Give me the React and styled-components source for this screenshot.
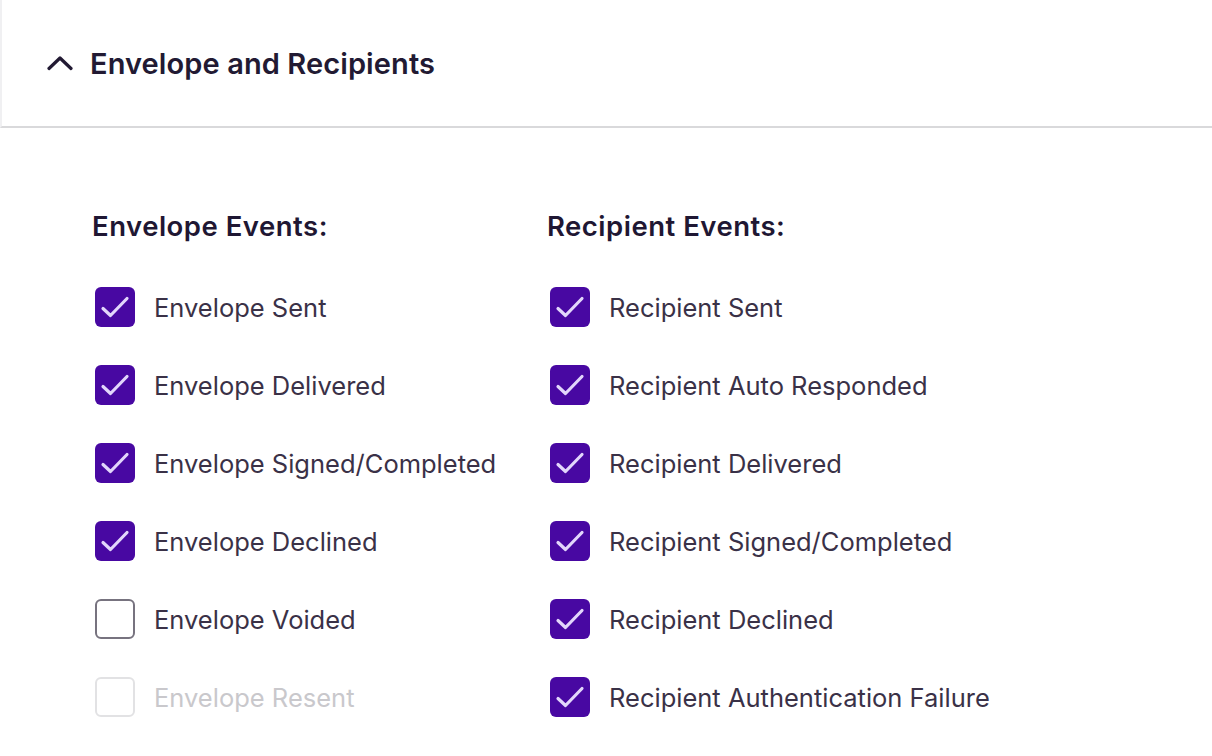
import React from "react";
import styled, { createGlobalStyle } from "styled-components";

const GlobalStyle = createGlobalStyle`
  body {
    margin: 0;
    background: #ffffff;
    font-family: "Inter", "Open Sans", sans-serif;
  }
`;

const envelopeEvents = [
  { label: "Envelope Sent", checked: true },
  { label: "Envelope Delivered", checked: true },
  { label: "Envelope Signed/Completed", checked: true },
  { label: "Envelope Declined", checked: true },
  { label: "Envelope Voided", checked: false },
  { label: "Envelope Resent", checked: false, disabled: true },
];

const recipientEvents = [
  { label: "Recipient Sent", checked: true },
  { label: "Recipient Auto Responded", checked: true },
  { label: "Recipient Delivered", checked: true },
  { label: "Recipient Signed/Completed", checked: true },
  { label: "Recipient Declined", checked: true },
  { label: "Recipient Authentication Failure", checked: true },
];

const Chevron = () => (
  <svg width="26" height="16" viewBox="0 0 26 16" fill="none">
    <path
      d="M2 13.5 L13 3 L24 13.5"
      stroke="#221a33"
      strokeWidth="3.2"
      strokeLinecap="round"
      strokeLinejoin="round"
    />
  </svg>
);

const Check = () => (
  <svg width="40" height="40" viewBox="0 0 40 40" fill="none">
    <path
      d="M8 21.5 L15.5 28.5 L32 11.5"
      stroke="#e2d6fb"
      strokeWidth="3.2"
      strokeLinecap="round"
      strokeLinejoin="round"
    />
  </svg>
);

const EventColumn = ({ title, items }) => (
  <Column>
    <ColumnTitle>{title}</ColumnTitle>
    {items.map((item) => (
      <Row key={item.label} $disabled={item.disabled}>
        <Box $checked={item.checked} $disabled={item.disabled}>
          {item.checked && <Check />}
        </Box>
        <Label $disabled={item.disabled}>{item.label}</Label>
      </Row>
    ))}
  </Column>
);

const App = () => {
  return (
    <>
      <GlobalStyle />
      <Panel>
        <Header>
          <Chevron />
          <HeaderTitle>Envelope and Recipients</HeaderTitle>
        </Header>
        <Body>
          <EventColumn title="Envelope Events:" items={envelopeEvents} />
          <EventColumn title="Recipient Events:" items={recipientEvents} />
        </Body>
      </Panel>
    </>
  );
};

const Panel = styled.section`
  width: 1212px;
  height: 756px;
  overflow: hidden;
  background: #fff;
`;

const Header = styled.div`
  display: flex;
  align-items: center;
  gap: 17px;
  height: 128px;
  padding-left: 45px;
  box-sizing: border-box;
  border-left: 2px solid #f0f0f2;
  border-bottom: 2px solid #d9d9db;
`;

const HeaderTitle = styled.h2`
  margin: 0;
  font-size: 29px;
  font-weight: 600;
  letter-spacing: 0.1px;
  color: #221a33;
`;

const Body = styled.div`
  display: grid;
  grid-template-columns: 455px 1fr;
  padding: 82px 0 0 92px;
`;

const Column = styled.div`
  display: flex;
  flex-direction: column;
`;

const ColumnTitle = styled.h3`
  margin: 0 0 26px;
  height: 32px;
  line-height: 32px;
  font-size: 27.5px;
  font-weight: 600;
  letter-spacing: 0.5px;
  color: #1f1733;
`;

const Row = styled.label`
  display: flex;
  align-items: center;
  gap: 19px;
  height: 78px;
  padding-left: 3px;
  cursor: ${(p) => (p.$disabled ? "default" : "pointer")};
`;

const Box = styled.span`
  display: flex;
  width: 40px;
  height: 40px;
  box-sizing: border-box;
  border-radius: 6px;
  flex-shrink: 0;
  background: ${(p) => (p.$checked ? "#4808a2" : "#fff")};
  border: ${(p) =>
    p.$checked
      ? "none"
      : p.$disabled
      ? "2.5px solid #e2e2e4"
      : "2.5px solid #77737f"};
`;

const Label = styled.span`
  font-size: 25.5px;
  color: ${(p) => (p.$disabled ? "#c9c8cc" : "#3a3147")};
`;

export default App;
